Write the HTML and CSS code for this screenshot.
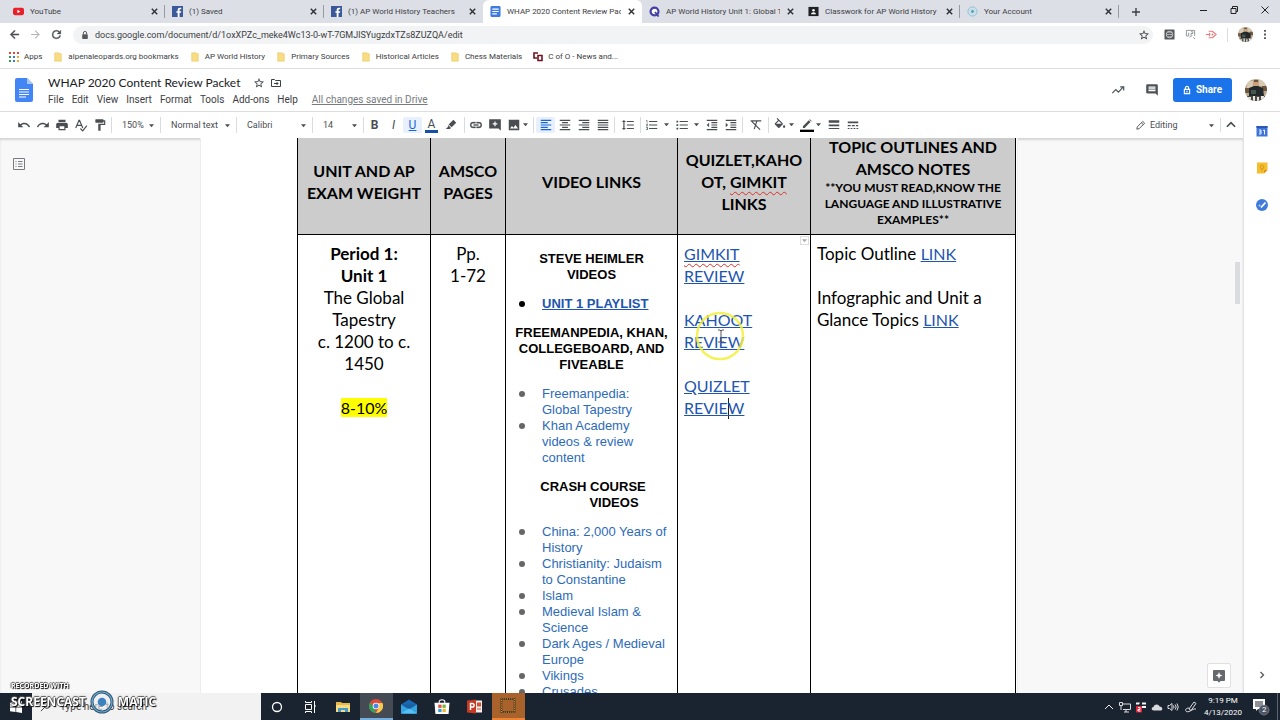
FILE: index.html
```html
<!DOCTYPE html>
<html lang="en">
<head>
<meta charset="utf-8">
<title>WHAP 2020 Content Review Packet</title>
<link rel="stylesheet" href="styles.css">
</head>
<body>
<svg class="sprite" aria-hidden="true">
  <symbol id="close" viewBox="0 0 10 10"><path d="M2 2l6 6M8 2l-6 6" fill="none" stroke="currentColor" stroke-width="1.6"/></symbol>
  <symbol id="fb" viewBox="0 0 12 12"><path fill="#3b5998" d="M0 0h12v12H0z"/><path fill="#fff" d="M6.2 12V7.4H4.8V5.6h1.4V4.3C6.200 2.700 7.100 1.800 8.600 1.800h1.500v1.800H9c-.6 0-.8.3-.8.8v1.200h1.900l-.3 1.800H8.200V12z"/></symbol>
  <symbol id="folder" viewBox="0 0 10 12"><path fill="#f7dc83" stroke="#e6c45c" stroke-width=".6" d="M1 1h5.500l1 1H9v9H1z"/></symbol>
  <symbol id="star" viewBox="0 0 24 24"><path fill="currentColor" d="M22 9.240l-7.190-.62L12 2 9.190 8.630 2 9.240l5.460 4.730L5.820 21 12 17.270 18.180 21l-1.630-7.030L22 9.240zM12 15.400l-3.760 2.270 1-4.280-3.320-2.880 4.380-.38L12 6.100l1.710 4.040 4.380.38-3.320 2.880 1 4.280L12 15.400z"/></symbol>
  <symbol id="bars-left" viewBox="0 0 24 24"><path fill="currentColor" d="M15 15H3v2h12v-2zm0-8H3v2h12V7zM3 13h18v-2H3v2zm0 8h18v-2H3v2zM3 3v2h18V3H3z"/></symbol>
  <symbol id="bars-center" viewBox="0 0 24 24"><path fill="currentColor" d="M7 15v2h10v-2H7zm-4 6h18v-2H3v2zm0-8h18v-2H3v2zm4-6v2h10V7H7zM3 3v2h18V3H3z"/></symbol>
  <symbol id="bars-right" viewBox="0 0 24 24"><path fill="currentColor" d="M3 21h18v-2H3v2zm6-4h12v-2H9v2zm-6-4h18v-2H3v2zm6-4h12V7H9v2zM3 3v2h18V3H3z"/></symbol>
  <symbol id="bars-full" viewBox="0 0 24 24"><path fill="currentColor" d="M3 21h18v-2H3v2zm0-4h18v-2H3v2zm0-4h18v-2H3v2zm0-4h18V7H3v2zm0-6v2h18V3H3z"/></symbol>
  <symbol id="caret" viewBox="0 0 6 4"><path fill="currentColor" d="M0 0h6L3 3.400z"/></symbol>
  <symbol id="portrait" viewBox="0 0 22 22"><clipPath id="round"><circle cx="11" cy="11" r="11"/></clipPath><g clip-path="url(#round)"><path fill="#b9a78c" d="M0 0h22v22H0z"/><path fill="#d8cbb2" d="M2 2h6v7H2zM14 1h6v6h-6z"/><path fill="#6c5642" d="M9 1h4v3H9zM0 9h4v5H0zM17 7h5v5h-5z"/><path fill="#d1a17f" d="M9 3h4v5H9z"/><path fill="#23292b" d="M4 9l5-2h4l5 2 1 8H4z"/><path fill="#44594b" d="M6 11h5v4H6z"/><path fill="#4b4a45" d="M0 17h22v5H0z"/><path fill="#e8e6df" d="M3 18h3v4H3zM8 17h2v5H8zM12 18h2v4h-2zM16 17h3v5h-3z"/></g></symbol>
</svg>

<header class="browser">
  <div class="tabs">
    <div class="tab"><svg class="fav" viewBox="0 0 12 12"><rect y="2" width="12" height="8" rx="2" fill="#e8202a"/><path fill="#fff" d="M4.800 4v4l3.200-2z"/></svg><span class="tab-title">YouTube</span><button class="tab-x" aria-label="Close tab"><svg><use href="#close"/></svg></button></div>
    <div class="tab"><svg class="fav"><use href="#fb"/></svg><span class="tab-title">(1) Saved</span><button class="tab-x" aria-label="Close tab"><svg><use href="#close"/></svg></button></div>
    <div class="tab plain"><svg class="fav"><use href="#fb"/></svg><span class="tab-title">(1) AP World History Teachers</span><button class="tab-x" aria-label="Close tab"><svg><use href="#close"/></svg></button></div>
    <div class="tab active"><svg class="fav" viewBox="0 0 12 12"><rect x=".5" y="0" width="11" height="12" rx="1.500" fill="#3c7be0"/><path stroke="#fff" stroke-width="1.300" d="M2.500 3.500h7M2.500 6h7M2.500 8.500h5"/></svg><span class="tab-title">WHAP 2020 Content Review Pac</span><button class="tab-x" aria-label="Close tab"><svg><use href="#close"/></svg></button></div>
    <div class="tab plain"><svg class="fav" viewBox="0 0 12 12"><circle cx="6" cy="6" r="4.300" fill="#fff" stroke="#423ea8" stroke-width="2.400"/><path stroke="#423ea8" stroke-width="2" d="M6.500 6.500l4 5"/></svg><span class="tab-title">AP World History Unit 1: Global T</span><button class="tab-x" aria-label="Close tab"><svg><use href="#close"/></svg></button></div>
    <div class="tab"><svg class="fav" viewBox="0 0 12 12"><rect x=".5" y="1" width="11" height="10" fill="#202124"/><circle cx="6" cy="4.700" r="1.400" fill="#fff"/><path fill="#fff" d="M3.300 9c0-3 5.400-3 5.400 0z"/></svg><span class="tab-title">Classwork for AP World History</span><button class="tab-x" aria-label="Close tab"><svg><use href="#close"/></svg></button></div>
    <div class="tab"><svg class="fav" viewBox="0 0 12 12"><circle cx="6" cy="6" r="5" fill="none" stroke="#7fc2d4"/><circle cx="6" cy="6" r="3" fill="none" stroke="#b7dce6"/><circle cx="6" cy="6" r="1.600" fill="#4aa6c0"/></svg><span class="tab-title">Your Account</span><button class="tab-x" aria-label="Close tab"><svg><use href="#close"/></svg></button></div>
    <button class="new-tab" aria-label="New tab"><svg viewBox="0 0 10 10"><path stroke="#3c4043" stroke-width="1.400" d="M5 1v8M1 5h8"/></svg></button>
    <div class="window-buttons">
      <button aria-label="Minimize"><svg viewBox="0 0 10 10"><path stroke="#222" d="M2 5.500h7"/></svg></button>
      <button aria-label="Restore"><svg viewBox="0 0 10 10"><path fill="none" stroke="#222" d="M2 3.500h5v5H2zM3.500 3.500v-2h5v5H7"/></svg></button>
      <button aria-label="Close"><svg viewBox="0 0 10 10"><path stroke="#222" d="M1.500 1.500l7 7M8.500 1.500l-7 7"/></svg></button>
    </div>
  </div>
  <div class="address-row">
    <button class="nav" aria-label="Back"><svg viewBox="0 0 24 24"><path fill="#4a4d51" d="M20 11H7.830l5.590-5.590L12 4l-8 8 8 8 1.410-1.410L7.830 13H20v-2z" stroke="#4a4d51"/></svg></button>
    <button class="nav" aria-label="Forward"><svg viewBox="0 0 24 24"><path fill="#b4b6ba" d="M12 4l-1.410 1.410L16.170 11H4v2h12.170l-5.580 5.590L12 20l8-8z"/></svg></button>
    <button class="nav" aria-label="Reload"><svg viewBox="0 0 24 24"><path fill="#4a4d51" stroke="#4a4d51" stroke-width=".6" d="M17.650 6.350A7.960 7.960 0 0 0 12 4a8 8 0 1 0 7.730 10h-2.080A6 6 0 1 1 12 6c1.660 0 3.140.69 4.220 1.780L13 11h7V4l-2.350 2.350z"/></svg></button>
    <div class="omnibox">
      <svg viewBox="0 0 10 12"><rect x="1.500" y="5" width="7" height="6" rx=".8" fill="#55585c"/><path fill="none" stroke="#55585c" stroke-width="1.200" d="M3 5V3.500a2 2 0 0 1 4 0V5"/></svg>
      <input aria-label="Address" value="docs.google.com/document/d/1oxXPZc_meke4Wc13-0-wT-7GMJlSYugzdxTZs8ZUZQA/edit">
      <button class="bare" aria-label="Bookmark"><svg><use href="#star"/></svg></button>
    </div>
    <div class="extensions">
      <svg viewBox="0 0 12 12"><rect x=".5" y=".5" width="11" height="11" rx="1" fill="#55585c"/><circle cx="6" cy="6" r="3.500" fill="none" stroke="#d0d2d4"/><path stroke="#d0d2d4" stroke-width=".8" d="M3 6h6M4 3.500h5M4 8.500h5"/></svg>
      <svg viewBox="0 0 12 12"><path fill="none" stroke="#8b8e92" d="M1.500 1.500h9v6M1.500 1.500v6h3M4 4v3M6.500 3h2v2h-2v2M5 9l3-2M9 9l2 2"/></svg>
      <svg viewBox="0 0 12 12"><path fill="none" stroke="#ee7773" stroke-width="1.200" d="M3 2.500h4l4 3.500-4 3.500H3M0 6h4M4 4v4"/><circle cx="7" cy="6" r="1" fill="#ee7773"/></svg>
      <i class="thin"></i>
      <svg class="face"><use href="#portrait"/></svg>
      <svg class="dots" viewBox="0 0 4 12"><path fill="#4a4d51" d="M1 1h2v2H1zM1 5h2v2H1zM1 9h2v2H1z"/></svg>
    </div>
  </div>
  <nav class="bookmarks">
    <a href="#"><svg viewBox="0 0 10 10"><path fill="#d84a3a" d="M0 0h2v2H0zM4 0h2v2H4zM8 0h2v2H8z"/><path fill="#359a55" d="M0 4h2v2H0z"/><path fill="#3b76d9" d="M4 4h2v2H4zM4 8h2v2H4z"/><path fill="#e6ad25" d="M8 4h2v2H8zM8 8h2v2H8z"/><path fill="#359a55" d="M0 8h2v2H0z"/></svg>Apps</a>
    <a href="#"><svg><use href="#folder"/></svg>alpenaleopards.org bookmarks</a>
    <a href="#"><svg><use href="#folder"/></svg>AP World History</a>
    <a href="#"><svg><use href="#folder"/></svg>Primary Sources</a>
    <a href="#"><svg><use href="#folder"/></svg>Historical Articles</a>
    <a href="#"><svg><use href="#folder"/></svg>Chess Materials</a>
    <a href="#"><svg viewBox="0 0 10 10"><path fill="none" stroke="#6d1322" stroke-width="1.600" d="M5 1H1v5h3M5 3.500h4v5H5z"/></svg>C of O - News and...</a>
  </nav>
</header>

<header class="docs-head">
  <svg class="docs-logo" viewBox="0 0 18 24"><path fill="#4285f4" d="M2 0h10l6 6v16a2 2 0 0 1-2 2H2a2 2 0 0 1-2-2V2a2 2 0 0 1 2-2z"/><path fill="#a8c7fa" d="M12 0l6 6h-6z"/><path stroke="#fff" stroke-width="1.200" d="M4 11.500h10M4 14h10M4 16.500h10M4 19h7"/></svg>
  <div class="doc-info">
    <div class="title-row"><h1>WHAP 2020 Content Review Packet</h1>
      <button class="bare" aria-label="Star"><svg><use href="#star"/></svg></button>
      <button class="bare" aria-label="Move"><svg viewBox="0 0 24 24"><path fill="none" stroke="currentColor" stroke-width="2" d="M3 5h6l2 2h10v12H3zM8 13h8M13 10l3 3-3 3"/></svg></button></div>
    <div class="menu"><button>File</button><button>Edit</button><button>View</button><button>Insert</button><button>Format</button><button>Tools</button><button>Add-ons</button><button>Help</button><a href="#">All changes saved in Drive</a></div>
  </div>
  <div class="doc-actions">
    <button class="bare" aria-label="Activity"><svg viewBox="0 0 16 12"><path fill="none" stroke="#4f5357" stroke-width="1.400" d="M1.500 9.500l4-4 3 3 5-5.500M10.500 2.500h4v4"/></svg></button>
    <button class="bare" aria-label="Comments"><svg viewBox="0 0 24 24"><path fill="#4f5357" d="M22 4a2 2 0 0 0-2-2H4a2 2 0 0 0-2 2v12c0 1.100.9 2 2 2h14l4 4V4zm-4 10H6v-2h12v2zm0-3H6V9h12v2zm0-3H6V6h12v2z"/></svg></button>
    <button class="share"><svg viewBox="0 0 10 12"><path fill="none" stroke="#fff" stroke-width="1.400" d="M3 5V3.500a2 2 0 0 1 4 0V5M1.700 5.200h6.600v5.300H1.700zM5 7v2"/></svg>Share</button>
    <svg class="avatar"><use href="#portrait"/></svg>
  </div>
</header>

<main class="workspace">
  <div class="editor">
    <div class="toolbar">
      <div class="group">
        <button aria-label="Undo"><svg viewBox="0 0 24 24"><path fill="currentColor" d="M12.500 8c-2.650 0-5.050.99-6.900 2.600L2 7v9h9l-3.620-3.620c1.390-1.160 3.160-1.880 5.120-1.880 3.540 0 6.550 2.310 7.600 5.500l2.370-.78C21.080 11.030 17.150 8 12.500 8z"/></svg></button>
        <button aria-label="Redo"><svg viewBox="0 0 24 24"><path fill="currentColor" d="M18.400 10.600C16.550 8.990 14.150 8 11.500 8c-4.650 0-8.580 3.030-9.960 7.220L3.900 16a8.002 8.002 0 0 1 7.600-5.500c1.950 0 3.730.72 5.120 1.880L13 16h9V7l-3.600 3.600z"/></svg></button>
        <button aria-label="Print"><svg viewBox="0 0 24 24"><path fill="currentColor" d="M19 8H5c-1.660 0-3 1.340-3 3v6h4v4h12v-4h4v-6c0-1.660-1.340-3-3-3zm-3 11H8v-5h8v5zm2-16H6v4h12V3z"/></svg></button>
        <button aria-label="Spell check"><svg viewBox="0 0 24 24"><path fill="none" stroke="currentColor" stroke-width="2" d="M3 17L8.500 4h1L15 17M5 12.500h8M11 18l4 4 7-9"/></svg></button>
        <button aria-label="Paint format"><svg viewBox="0 0 24 24"><path fill="currentColor" d="M18 4V3c0-.55-.45-1-1-1H5c-.55 0-1 .45-1 1v4c0 .55.45 1 1 1h12c.55 0 1-.45 1-1V6h1v4H9v11c0 .55.45 1 1 1h2c.55 0 1-.45 1-1v-9h8V4h-3z"/></svg></button>
      </div>
      <div class="group pick zoom"><select aria-label="Zoom"><option>150%</option></select><svg class="caret"><use href="#caret"/></svg></div>
      <div class="group pick style"><select aria-label="Style"><option>Normal text</option></select><svg class="caret"><use href="#caret"/></svg></div>
      <div class="group pick family"><select aria-label="Font"><option>Calibri</option></select><svg class="caret"><use href="#caret"/></svg></div>
      <div class="group pick size"><select aria-label="Font size"><option>14</option></select><svg class="caret"><use href="#caret"/></svg></div>
      <div class="group text-tools">
        <button aria-label="Bold"><b>B</b></button>
        <button aria-label="Italic"><em>I</em></button>
        <button class="on" aria-label="Underline"><u>U</u></button>
        <button aria-label="Text color"><span class="ink">A</span></button>
        <button aria-label="Highlight"><svg viewBox="0 0 24 24"><path fill="currentColor" d="M16 3l5 5-8 8-5-5zM7 12l5 5-2 2H3l4-4z"/></svg></button>
      </div>
      <div class="group insert">
        <button aria-label="Link"><svg viewBox="0 0 24 24"><path fill="currentColor" d="M3.900 12c0-1.710 1.390-3.100 3.100-3.100h4V7H7a5 5 0 0 0 0 10h4v-1.900H7c-1.710 0-3.100-1.390-3.100-3.100zM8 13h8v-2H8v2zm9-6h-4v1.900h4a3.100 3.100 0 0 1 0 6.200h-4V17h4a5 5 0 0 0 0-10z" stroke="currentColor" stroke-width=".6"/></svg></button>
        <button aria-label="Comment"><svg viewBox="0 0 24 24"><path fill="currentColor" fill-rule="evenodd" d="M2 2h20v20l-4-4H2zM11 6v3H8v2h3v3h2v-3h3V9h-3V6z"/></svg></button>
        <button aria-label="Image"><svg viewBox="0 0 24 24"><path fill="currentColor" fill-rule="evenodd" d="M3 3h18v18H3zM8.500 13.500L5 18h14l-4.500-6-3.500 4.500z"/></svg></button>
        <svg class="caret"><use href="#caret"/></svg>
      </div>
      <div class="group roomy">
        <button class="on" aria-label="Left"><svg><use href="#bars-left"/></svg></button>
        <button aria-label="Center"><svg><use href="#bars-center"/></svg></button>
        <button aria-label="Right"><svg><use href="#bars-right"/></svg></button>
        <button aria-label="Justify"><svg><use href="#bars-full"/></svg></button>
      </div>
      <div class="group spacing">
        <button aria-label="Line spacing"><svg viewBox="0 0 24 24"><path fill="currentColor" d="M6 7h2.500L5 3.500 1.500 7H4v10H1.500L5 20.500 8.500 17H6V7zm4-2v2h12V5H10zm0 14h12v-2H10v2zm0-6h12v-2H10v2z"/></svg></button>
      </div>
      <div class="group">
        <button aria-label="Numbered list"><svg viewBox="0 0 24 24"><path fill="currentColor" d="M2 17h2v.5H3v1h1v.5H2v1h3v-4H2v1zm1-9h1V4H2v1h1v3zm-1 3h1.800L2 13.100v.9h3v-1H3.200L5 10.900V10H2v1zm5-6v2h14V5H7zm0 14h14v-2H7v2zm0-6h14v-2H7v2z"/></svg></button>
        <svg class="caret wide"><use href="#caret"/></svg>
        <button aria-label="Bulleted list"><svg viewBox="0 0 24 24"><path fill="currentColor" d="M2.500 4.500h3v3h-3zM2.500 10.500h3v3h-3zM2.500 16.500h3v3h-3zM8 5h14v2H8zM8 11h14v2H8zM8 17h14v2H8z"/></svg></button>
        <svg class="caret wide"><use href="#caret"/></svg>
        <button aria-label="Decrease indent"><svg viewBox="0 0 24 24"><path fill="currentColor" d="M11 17h10v-2H11v2zm-8-5l4 4V8l-4 4zm0 9h18v-2H3v2zM3 3v2h18V3H3zm8 6h10V7H11v2zm0 4h10v-2H11v2z"/></svg></button>
        <button aria-label="Increase indent"><svg viewBox="0 0 24 24"><path fill="currentColor" d="M3 21h18v-2H3v2zM3 8v8l4-4-4-4zm8 9h10v-2H11v2zM3 3v2h18V3H3zm8 6h10V7H11v2zm0 4h10v-2H11v2z"/></svg></button>
      </div>
      <div class="group spacing">
        <button aria-label="Clear formatting"><svg viewBox="0 0 24 24"><path fill="none" stroke="currentColor" stroke-width="2" d="M5 5h16M13.500 5L9 19M3 4l16 16"/></svg></button>
      </div>
      <div class="group last">
        <button aria-label="Fill color"><svg viewBox="0 0 24 24"><path fill="currentColor" d="M16.560 8.940L7.620 0 6.210 1.410l2.380 2.380-5.150 5.150a1.490 1.490 0 0 0 0 2.120l5.500 5.500c.59.59 1.540.59 2.120 0l5.500-5.500c.59-.58.59-1.530 0-2.120zM5.210 10L10 5.210 14.790 10H5.210zM19 11.500s-2 2.170-2 3.500a2 2 0 0 0 4 0c0-1.330-2-3.500-2-3.500z"/></svg></button>
        <svg class="caret"><use href="#caret"/></svg>
        <button aria-label="Border color"><svg viewBox="0 0 24 24"><path fill="currentColor" d="M5 14L15 4l3 3L8 17H5zM16 3l1-1 3 3-1 1z"/><path fill="#000" d="M0 20h24v4H0z"/></svg></button>
        <svg class="caret"><use href="#caret"/></svg>
        <button aria-label="Border width"><svg viewBox="0 0 24 24"><path fill="currentColor" d="M3 4h18v4H3zM3 11h18v3H3zM3 17h18v2H3z"/></svg></button>
        <button aria-label="Border dash"><svg viewBox="0 0 24 24"><path fill="currentColor" d="M3 6h18v3H3zM3 12h5v2H3zM10 12h5v2h-5zM17 12h4v2h-4zM3 17h3v2H3zM8 17h3v2H8zM13 17h3v2h-3zM18 17h3v2h-3z"/></svg></button>
      </div>
      <div class="mode">
        <svg viewBox="0 0 24 24"><path fill="none" stroke="currentColor" stroke-width="2" d="M4 20l1-5L17 3l4 4L9 19zM14 6l4 4"/></svg>
        <div class="pick editing"><select aria-label="Mode"><option>Editing</option></select><svg class="caret"><use href="#caret"/></svg></div>
        <i class="thin"></i>
        <button aria-label="Hide menus"><svg viewBox="0 0 24 24"><path fill="none" stroke="currentColor" stroke-width="3" d="M5 15l7-7 7 7"/></svg></button>
      </div>
    </div>

    <div class="canvas">
      <button class="outline" aria-label="Show outline"><svg viewBox="0 0 12 12"><path fill="none" stroke="#777a7e" d="M.5.500h11v11H.500zM2.500 3.500h1M5 3.500h4.500M2.500 6h1M5 6h4.500M2.500 8.500h1M5 8.500h4.500"/></svg></button>
      <article class="page">
        <table>
          <colgroup><col class="c1"><col class="c2"><col class="c3"><col class="c4"><col class="c5"></colgroup>
          <thead><tr>
            <th>UNIT AND AP EXAM WEIGHT</th><th>AMSCO PAGES</th><th>VIDEO LINKS</th>
            <th>QUIZLET,KAHO<br>OT, <span class="typo">GIMKIT</span><br>LINKS</th>
            <th>TOPIC OUTLINES AND<br>AMSCO NOTES<small>**YOU MUST READ,KNOW THE<br>LANGUAGE AND ILLUSTRATIVE<br>EXAMPLES**</small></th>
          </tr></thead>
          <tbody><tr>
            <td class="mid"><b>Period 1:<br>Unit 1</b><br>The Global<br>Tapestry<br>c. 1200 to c.<br>1450<br><br><mark>8-10%</mark></td>
            <td class="mid">Pp.<br>1-72</td>
            <td class="videos">
              <h2>STEVE HEIMLER<br>VIDEOS</h2>
              <ul class="strong"><li><a href="#">UNIT 1 PLAYLIST</a></li></ul>
              <h2>FREEMANPEDIA, KHAN,<br>COLLEGEBOARD, AND<br>FIVEABLE</h2>
              <ul><li><a href="#">Freemanpedia:<br>Global Tapestry</a></li><li><a href="#">Khan Academy<br>videos &amp; review<br>content</a></li></ul>
              <h2 class="hang">CRASH COURSE<br>VIDEOS</h2>
              <ul><li><a href="#">China: 2,000 Years of<br>History</a></li><li><a href="#">Christianity: Judaism<br>to Constantine</a></li><li><a href="#">Islam</a></li><li><a href="#">Medieval Islam &amp;<br>Science</a></li><li><a href="#">Dark Ages / Medieval<br>Europe</a></li><li><a href="#">Vikings</a></li><li><a href="#">Crusades</a></li></ul>
            </td>
            <td class="quiz">
              <button class="cell-menu" aria-label="Cell options"><svg class="caret"><use href="#caret"/></svg></button>
              <a href="#"><span class="typo">GIMKIT</span><br>REVIEW</a><br><br>
              <span class="pointed"><a href="#">KAHOOT<br>REVIEW</a><svg class="pointer" viewBox="0 0 50 50"><circle cx="25" cy="25" r="23" fill="none" stroke="#f3ee3c" stroke-width="2.500" opacity=".85"/><path fill="none" stroke="#555" d="M23 19h2l1 1 1-1h2M26 20v10M23 31h2l1-1 1 1h2"/></svg></span><br><br>
              <a href="#">QUIZLET<br>REVIE<i class="cursor"></i>W</a>
            </td>
            <td>Topic Outline <a href="#">LINK</a><br><br>Infographic and Unit a Glance Topics <a href="#">LINK</a></td>
          </tr></tbody>
        </table>
      </article>
      <i class="scroll-thumb"></i>
      <button class="explore" aria-label="Explore"><svg viewBox="0 0 14 14"><path fill="#66696d" d="M2 1h10a1 1 0 0 1 1 1v9a1 1 0 0 1-1 1H8.500L7 13.800 5.500 12H2a1 1 0 0 1-1-1V2a1 1 0 0 1 1-1z"/><path fill="#fff" d="M7 3l1 2.500 2.500 1L8 7.500 7 10 6 7.500l-2.500-1L6 5.500z"/></svg></button>
    </div>
  </div>
  <aside class="side">
    <button aria-label="Calendar"><svg viewBox="0 0 12 12"><path fill="#3f74d8" d="M.5 1h11v10.500H.500z"/><path fill="#2a56b5" d="M.5 1h11v2H.500z"/><path fill="none" stroke="#fff" stroke-width=".9" d="M3 5h2v4H3M3 7h2M7 5.500L8.500 5v4.500"/></svg></button>
    <button aria-label="Keep"><svg viewBox="0 0 12 12"><path fill="#f6bd2d" d="M1 .5h10.500v7.500L8 11.500H1z"/><path fill="#dd9617" d="M8 11.500V8h3.500z"/><circle cx="6" cy="5" r="1.800" fill="none" stroke="#d99c20"/><path stroke="#d99c20" d="M5 8h2"/></svg></button>
    <button aria-label="Tasks"><svg viewBox="0 0 12 12"><circle cx="6" cy="6" r="6" fill="#3f7bdb"/><path fill="none" stroke="#fff" stroke-width="1.800" d="M5 8.500l4.500-5"/><circle cx="3.500" cy="6.500" r="1" fill="#bdd2f5"/></svg></button>
    <button class="side-more" aria-label="Show side panel"><svg viewBox="0 0 12 12"><path fill="none" stroke="#55585c" stroke-width="1.300" d="M4.500 3l3 3-3 3"/></svg></button>
  </aside>
</main>

<footer class="taskbar">
  <button class="start" aria-label="Start"><svg viewBox="0 0 12 12"><path fill="#fff" d="M0 1.800L5.500 1v4.700H0zM6.200.900L12 0v5.700H6.200zM0 6.400h5.500V11L0 10.200zM6.200 6.400H12V12l-5.800-.9z"/></svg></button>
  <label class="search"><svg viewBox="0 0 12 12"><circle cx="7.500" cy="4.500" r="3.500" fill="none" stroke="#333"/><path stroke="#333" d="M5 7l-4 4"/></svg><input aria-label="Search" placeholder="Type here to search"></label>
  <div class="apps">
    <button aria-label="Cortana"><svg viewBox="0 0 14 14"><circle cx="7" cy="7" r="4.500" fill="none" stroke="#fff" stroke-width="1.300"/></svg></button>
    <button aria-label="Task View"><svg viewBox="0 0 14 14"><path fill="none" stroke="#fff" d="M2.500 4.500h6v5h-6zM2.500 1v1.500h6V1M2.500 13v-1.500h6V13M11.500 1v12M11 6h2"/></svg></button>
    <button aria-label="File Explorer"><svg viewBox="0 0 14 14"><path fill="#e5b94b" d="M0 2h5l1 1h8v9H0z"/><path fill="#f8dc83" d="M0 5h14v7H0z"/><path fill="#4799c8" d="M2 8h10v4H9v-2H5v2H2z"/></svg></button>
    <button class="running" aria-label="Chrome"><svg viewBox="0 0 14 14"><circle cx="7" cy="7" r="7" fill="#de4b3c"/><path fill="#2da65a" d="M.9 3.600L5 8.500 7 14A7 7 0 0 1 .9 3.600z"/><path fill="#f8cd45" d="M7 14l3-5.500L9.500 4H13.400A7 7 0 0 1 7 14z"/><circle cx="7" cy="7" r="3.300" fill="#fff"/><circle cx="7" cy="7" r="2.500" fill="#4a87e8"/></svg></button>
    <button aria-label="Mail"><svg class="mail" viewBox="0 0 16 14"><path fill="#1768b5" d="M0 5l8-5 8 5v9H0z"/><path fill="#1d5f9e" d="M2 5h12v4H2z"/><path fill="#35a4e3" d="M0 5l8 5 8-5v9H0z"/><path fill="#56c2f3" d="M0 14l8-5 8 5z"/></svg></button>
    <button aria-label="Store"><svg class="mail" viewBox="0 0 16 16"><path fill="none" stroke="#fff" stroke-width="1.200" d="M5 5V3c0-3 6-3 6 0v2"/><path fill="#fff" d="M0 4h16l-1 12H1z"/><path fill="#e6513c" d="M4 6h3.500v3.500H4z"/><path fill="#76b543" d="M8.500 6H12v3.500H8.500z"/><path fill="#2d9bd8" d="M4 10.500h3.500V14H4z"/><path fill="#f1b52c" d="M8.500 10.500H12V14H8.500z"/></svg></button>
    <button aria-label="PowerPoint"><svg class="mail" viewBox="0 0 16 14"><path fill="#f5eeee" d="M7 1h8v12H7z"/><path fill="#d35230" d="M10 3h4v4h-4zM10 9h4v1h-4z"/><path fill="#c43a23" d="M0 1l9-1v14l-9-1z"/><path fill="none" stroke="#fff" stroke-width="1.500" d="M3.500 10.500V4h1.700c2.500 0 2.500 3.600 0 3.600H3.500"/></svg></button>
    <button class="recorder" aria-label="Recorder"><svg class="mail" viewBox="0 0 16 16"><path fill="none" stroke="#231b12" stroke-width="1.600" d="M1 1h14v14H1z"/><path fill="none" stroke="#f1c553" stroke-dasharray="1 1" d="M1 1h14v14H1z"/></svg></button>
  </div>
  <div class="tray">
    <svg viewBox="0 0 12 12"><path fill="none" stroke="#eee" d="M2 8l4-4 4 4"/></svg>
    <svg viewBox="0 0 12 12"><path fill="none" stroke="#ddd" d="M3 3h8.500v5.500H4M7 9v2M5 11h5M.5 1.500h3v3h-3zM2 5v4"/></svg>
    <svg viewBox="0 0 12 12"><path fill="#f5f5f5" d="M1 1.500h4l-1 2H1zM7 1.500h4v2H7zM7 5h4v2H7z"/><path fill="#df2139" d="M1 5h6v6.500H1z"/><path fill="none" stroke="#fff" d="M3 6.500h2v2H3v1.500h2.500"/></svg>
    <svg viewBox="0 0 12 12"><path fill="#d8dade" d="M3 9.500C-.5 9.500.500 6 2.500 6 3.500 2.500 8 3 8.500 5.500c3 0 4 4 1 4z"/></svg>
    <svg viewBox="0 0 12 12"><path fill="none" stroke="#ddd" d="M1 4.500h1.500L5 2.500v7l-2.500-2H1zM6.500 4.500q1 1.500 0 3M8.200 3.500q2 2.500 0 5M10 2.500q2.500 3.500 0 7"/></svg>
    <svg class="pen" viewBox="0 0 12 12"><path fill="none" stroke="#ddd" d="M4 8l5-7 2 1.500-5 7zM4 7C-1 7 0 12 4 10.500s4-3 7-2.500"/></svg>
    <time datetime="2020-04-13T21:19">9:19 PM<br>4/13/2020</time>
    <button class="notify" aria-label="Notifications"><svg viewBox="0 0 18 18"><path fill="#fff" d="M1 1h12v10H6l-2 2v-2H1z"/><path stroke="#1b2431" d="M3 4h8M3 6h8M3 8h8"/><circle cx="12" cy="12" r="5" fill="#4b535e" stroke="#8e959d" stroke-width=".6"/></svg><span>2</span></button>
    <i class="desktop-edge"></i>
  </div>
</footer>

<div class="watermark"><span class="small">RECORDED WITH</span>
  <div><span>SCREENCAST</span><svg viewBox="0 0 24 24"><circle cx="12" cy="12" r="10" fill="#e9eef2" fill-opacity=".6" stroke="#2c5775" stroke-width="3"/><circle cx="12" cy="12" r="10" fill="none" stroke="#72a8cc" stroke-width="1.200"/><circle cx="12" cy="12" r="4.300" fill="#3c83bd"/></svg><span>MATIC</span></div>
</div>
</body>
</html>
```
FILE: styles.css
```css
* { box-sizing: border-box; }
body {
  margin: 0;
  height: 100vh;
  display: flex;
  flex-direction: column;
  overflow: hidden;
  background: #fff;
  color: #3c4043;
  font: 10px/14px Roboto, sans-serif;
}
button, input, select { font: inherit; color: inherit; border: 0; padding: 0; margin: 0; background: none; }
button { display: flex; align-items: center; justify-content: center; flex: none; }
svg { flex: none; }
a { color: inherit; }
.sprite { position: absolute; width: 0; height: 0; }
.thin { width: 1px; height: 14px; background: #dadce0; }
.bare svg { width: 12px; height: 12px; display: block; }

/* browser frame */
.browser { border-bottom: 1px solid #dcdddf; font-size: 8px; color: #3c4043; }
.tabs { display: flex; height: 23px; padding-left: 6px; background: #dddfe7; }
.tab { flex: 0 1 159px; min-width: 0; display: flex; align-items: center; padding: 0 6px 0 7px; gap: 6px; position: relative; }
.tab:not(.active):not(.plain)::after { content: ""; position: absolute; right: 0; top: 5px; width: 1px; height: 13px; background: #989ba2; }
.tab.active { background: #fff; border-radius: 6px 6px 0 0; }
.fav { width: 11px; height: 11px; }
.tab-title { flex: 1; min-width: 0; overflow: hidden; white-space: nowrap; }
.tab-x svg { width: 9px; height: 9px; color: #303236; }
.new-tab { width: 34px; }
.new-tab svg { width: 10px; }
.window-buttons { display: flex; margin-left: auto; }
.window-buttons button { width: 31px; height: 19px; }
.window-buttons svg { width: 10px; height: 10px; }
.address-row { display: flex; align-items: center; height: 23px; padding: 0 13px 0 4px; }
.nav { width: 21px; }
.nav svg { width: 13px; height: 13px; }
.omnibox { flex: 1; display: flex; align-items: center; gap: 6px; height: 18px; margin-left: 6px; padding: 0 3px 0 8px; border-radius: 9px; background: #f1f3f4; }
.omnibox > svg { width: 8px; height: 10px; }
.omnibox input { flex: 1; font-size: 9px; }
.extensions { display: flex; align-items: center; gap: 10px; margin-left: 11px; }
.extensions svg { width: 11px; height: 11px; }
.extensions .face { width: 15px; height: 15px; }
.extensions .dots { width: 4px; }
.bookmarks { display: flex; align-items: center; gap: 11px; height: 22px; padding: 0 9px 1px; }
.bookmarks a { display: flex; align-items: center; gap: 5px; text-decoration: none; white-space: nowrap; }
.bookmarks svg { width: 10px; height: 10px; }

/* document header */
.docs-head { display: flex; align-items: center; height: 43px; padding: 0 13px 0 15px; border-bottom: 1px solid #dcdddf; }
.docs-logo { width: 18px; height: 24px; }
.doc-info { margin-left: 15px; }
.title-row { display: flex; align-items: center; height: 20px; gap: 5px; }
.title-row h1 { margin: 0 8px 0 0; font: 12px/18px Lato, sans-serif; color: #202124; }
.menu { display: flex; gap: 8px; }
.menu a { margin-left: 6px; color: #777a7e; }
.doc-actions { display: flex; align-items: center; margin-left: auto; }
.doc-actions .bare { width: 34px; }
.doc-actions .bare svg { width: 14px; height: 14px; }
.share { width: 59px; height: 24px; margin: 0 13px 0 4px; gap: 5px; border-radius: 3px; background: #1a73e8; color: #fff; font-weight: 700; }
.share svg { width: 8px; height: 10px; }
.avatar { width: 22px; height: 22px; }

/* toolbar */
.workspace { flex: 1; min-height: 0; display: flex; }
.editor { flex: 1; min-width: 0; display: flex; flex-direction: column; }
.toolbar { display: flex; align-items: center; height: 26px; padding-left: 14px; font-size: 9px; color: #4a4d51; }
.group { display: flex; align-items: center; flex: none; height: 16px; padding-right: 2px; }
.group + .group { border-left: 1px solid #dadce0; padding-left: 1px; }
.toolbar button { width: 19px; height: 16px; border-radius: 2px; font-size: 12px; }
.toolbar button svg { width: 14px; height: 14px; }
.toolbar button.on { background: #e8f0fe; color: #1967d2; }
.caret { width: 5px; height: 4px; }
.caret.wide { margin: 0 3px; }
.last .caret, .insert .caret { margin-right: 3px; }
.pick { position: relative; }
.pick select { appearance: none; width: 100%; height: 16px; background: transparent; }
.pick .caret { position: absolute; right: 6px; top: 7px; }
.group.pick { padding: 0; }
.group + .group.pick { padding-left: 10px; }
.zoom { width: 49px; }
.style { width: 76px; }
.family { width: 76px; }
.size { width: 51px; }
.text-tools { padding-right: 4px; }
.ink { line-height: 12px; border-bottom: 3px solid #174ea6; padding: 0 3px; }
.group + .roomy { padding: 0 2px; }
.group + .spacing { padding: 0 3px; }
.mode { display: flex; align-items: center; margin-left: auto; padding-right: 3px; }
.mode > svg { width: 11px; height: 11px; margin-right: 4px; }
.editing { width: 70px; }

/* document canvas */
.canvas { flex: 1; min-height: 0; position: relative; display: flex; justify-content: center; padding-right: 25px; overflow: hidden; background: #f8f8f8; box-shadow: inset 0 2px 2px #d4d5d7; }
.outline { position: absolute; left: 13px; top: 20px; }
.outline svg { width: 12px; height: 12px; }
.page { flex: none; width: 818px; margin-top: -9px; padding-left: 96px; background: #fff; border: solid #ebecee; border-width: 0 1px; }
table { width: 719px; table-layout: fixed; border-collapse: collapse; font: 17px/22px Lato, sans-serif; color: #000; }
.c1 { width: 133px; } .c2 { width: 75px; } .c3 { width: 172px; } .c4 { width: 133px; } .c5 { width: 205px; }
th, td { border: 1px solid #000; padding: 6px; }
th { background: #ccc; font-size: 16px; font-weight: 700; padding: 6px 3px; }
th small { display: block; font-size: 12px; line-height: 16px; }
td { vertical-align: top; padding-top: 8px; }
td a { color: #1d55b0; font-size: 16px; }
.mid { text-align: center; }
mark { background: #ff0; color: inherit; font-size: 16px; }
.typo { text-decoration: underline wavy #d93025 1px; text-underline-offset: 3px; }
.videos { font: 13px/16px "Liberation Sans", sans-serif; padding: 16px 6px 0; }
.videos h2 { margin: 0 -4px; font-size: 13px; line-height: 16px; text-align: center; }
.videos .hang { padding-left: 45px; text-indent: -42px; }
.videos ul { margin: 13px -6px 13px 0; padding-left: 30px; color: #666; list-style: none; }
.videos li::before { content: ""; display: inline-block; width: 6px; height: 6px; margin: 0 17px 0 -23px; border-radius: 50%; background: currentColor; vertical-align: 1px; }
.videos ul a { text-decoration: none; color: #2d6bb8; font-size: 13px; }
.videos .strong { color: #000; font-weight: 700; }
.videos .strong a { text-decoration: underline; color: #1d55b0; }
.quiz { position: relative; }
.cell-menu { position: absolute; right: 1px; top: 1px; width: 9px; height: 9px; border: 1px solid #ddd; color: #aaa; }
.pointed { position: relative; display: inline-block; }
.pointer { position: absolute; left: 11px; top: 2px; width: 50px; height: 50px; }
.cursor { display: inline-block; width: 1px; height: 21px; margin-right: -1px; background: #222; vertical-align: -5px; }
.scroll-thumb { position: absolute; right: 3px; top: 124px; width: 5px; height: 42px; background: #dadce0; }
.explore { position: absolute; right: 12px; bottom: 5px; width: 24px; height: 25px; border: 1px solid #dfe0e2; border-radius: 2px; background: #fff; }
.explore svg { width: 14px; height: 14px; }
.side { width: 37px; display: flex; flex-direction: column; align-items: center; gap: 25px; padding: 13px 0 12px; border-left: 1px solid #e2e3e5; }
.side svg { width: 12px; height: 12px; display: block; }
.side-more { margin-top: auto; }

/* taskbar */
.taskbar { display: flex; flex: none; height: 27px; background: #1a2330; color: #fff; font-size: 8px; line-height: 12px; }
.start { width: 32px; }
.start svg { width: 12px; height: 12px; }
.search { display: flex; align-items: center; gap: 9px; width: 229px; padding-left: 8px; background: #f2f2f2; }
.search svg { width: 11px; height: 11px; }
.search input { flex: 1; min-width: 0; font-size: 10px; }
.search input::placeholder { color: #444; }
.apps { display: flex; }
.apps button { width: 33px; padding-right: 2px; }
.apps svg { width: 14px; height: 14px; }
.apps .mail { width: 16px; height: 15px; }
.apps .running { background: #444b55; border-bottom: 2px solid #76aedd; }
.apps .recorder { background: #a9622b; border-bottom: 2px solid #ed8334; }
.tray { display: flex; align-items: center; gap: 4px; margin-left: auto; }
.tray svg { width: 12px; height: 12px; }
.tray .pen { margin: 0 2px; }
time { width: 40px; text-align: center; white-space: nowrap; }
.notify { position: relative; margin-left: 5px; }
.tray .notify svg { width: 18px; height: 18px; }
.notify span { position: absolute; left: 10px; top: 6px; }
.desktop-edge { width: 1px; height: 27px; margin: 0 2px 0 3px; background: #5b626c; }

/* recorder overlay */
.watermark { position: fixed; left: 11px; bottom: 6px; color: #fff; font: 700 12px/24px "Open Sans", sans-serif; text-shadow: 1px 1px 1px #000, -1px 0 1px #555, 0 -1px 1px #555; pointer-events: none; }
.watermark div { display: flex; align-items: center; gap: 4px; }
.watermark svg { width: 24px; height: 24px; }
.watermark .small { display: block; font-size: 7px; line-height: 8px; }
```
